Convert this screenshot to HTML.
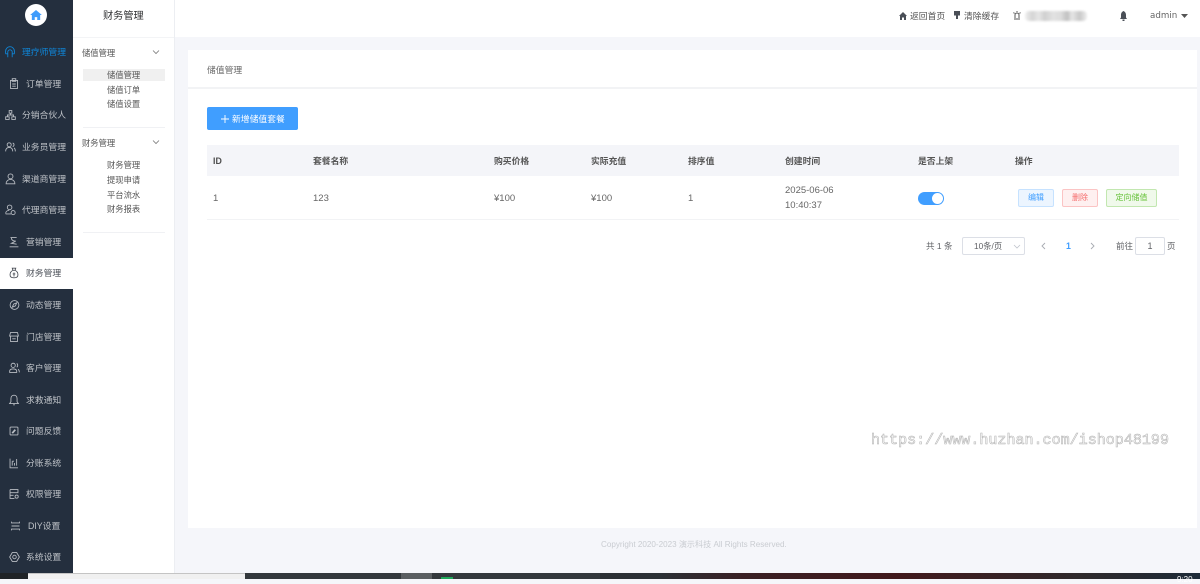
<!DOCTYPE html>
<html lang="zh"><head><meta charset="utf-8"><title>储值管理</title>
<style>
*{box-sizing:border-box;margin:0;padding:0}
html,body{width:1200px;height:579px;overflow:hidden;background:#f5f6fa;font-family:"Liberation Sans","Noto Sans CJK SC",sans-serif;color:#606266}
#w{position:absolute;left:0;top:0;width:1200px;height:579px;filter:blur(.3px)}
.a{position:absolute;white-space:nowrap}
.t{position:absolute;white-space:nowrap;font-size:8.800px;line-height:12px}
.s{font-size:8.300px;color:#555}
.h{font-weight:bold;color:#555;top:154.500px}
.r{font-size:9.500px;color:#666;top:193px}
#side{position:absolute;left:0;top:0;width:73px;height:573px;background:#242f3e}
.m{position:absolute;left:0;width:73px;height:31px;color:#bfc3c8;font-size:8.800px;line-height:31px;white-space:nowrap}
.m span{position:absolute;top:0}
.m svg{position:absolute;top:8px;fill:none;stroke:#b9bdc3;stroke-width:1;transform:scale(.88)}
</style></head><body><div id="w">
<div id="side"></div>
<div class="a" style="left:25px;top:4px;width:22px;height:22px;border-radius:50%;background:#fff"></div>
<svg class="a" style="left:30px;top:10px" width="12" height="10" viewBox="0 0 14 12"><path d="M7 0 14 6H12V12H8.500V8.500H5.500V12H2V6H0Z" fill="#3f9cfb"/></svg>

<div class="m" style="top:37px;color:#0f86d8"><svg style="left:4px" width="12" height="14" viewBox="0 0 12 14"><path style="stroke:#0f86d8" d="M1 9V6a5 5 0 0 1 10 0v3M3.500 13V7a2.500 2.500 0 0 1 5 0v6M1 9h2M9 9h2"/></svg><span style="left:22px">理疗师管理</span></div>
<div class="m" style="top:69px"><svg style="left:8px" width="12" height="14" viewBox="0 0 12 14"><path d="M2 3h8v9H2zM4 1h4v3H4zM4 7h4M4 9.500h4"/></svg><span style="left:26px">订单管理</span></div>
<div class="m" style="top:100px"><svg style="left:4px" width="13" height="14" viewBox="0 0 13 14"><path d="M5 2h3v3H5zM1 9h4v3H1zM8 9h4v3H8zM6.500 5v2M3 9V7h7v2"/></svg><span style="left:22px">分销合伙人</span></div>
<div class="m" style="top:132px"><svg style="left:4px" width="13" height="14" viewBox="0 0 13 14"><circle cx="5" cy="4.500" r="2.300"/><path d="M1 12c0-3 1.500-4.500 4-4.500S9 9 9 12M9 2.500c2 .3 2 3.700 0 4M10.500 8c1 .7 1.500 2 1.500 4"/></svg><span style="left:22px">业务员管理</span></div>
<div class="m" style="top:164px"><svg style="left:4px" width="13" height="14" viewBox="0 0 13 14"><circle cx="6.500" cy="4" r="2.800"/><path d="M1.500 12.500c0-3 2-5 5-5s5 2 5 5z"/></svg><span style="left:22px">渠道商管理</span></div>
<div class="m" style="top:195px"><svg style="left:4px" width="13" height="14" viewBox="0 0 13 14"><circle cx="5.500" cy="4" r="2.600"/><circle cx="9.500" cy="10" r="2.300"/><path d="M1 11c0-2 1.500-3.500 4-3.500M1 11.500h6"/></svg><span style="left:22px">代理商管理</span></div>
<div class="m" style="top:227px"><svg style="left:8px" width="12" height="14" viewBox="0 0 12 14"><path d="M2 2h7M3 2c0 3 2 4 5 4M8 6 3 8.500l6 1M1 12.500h10"/></svg><span style="left:26px">营销管理</span></div>
<div class="a" style="left:0;top:258px;width:73px;height:31px;background:#fff"></div>
<div class="m" style="top:258px;color:#4a4f57"><svg style="left:8px" width="12" height="14" viewBox="0 0 12 14"><path style="stroke:#4a4f57" d="M4 1.500h4L7.200 4c2.300 1 3.300 3 3.300 5 0 2.500-1.500 3.500-4.500 3.500S1.500 11.500 1.500 9c0-2 1-4 3.300-5zM4.800 4h2.400M4.500 8h3M6 6.500V11"/></svg><span style="left:26px">财务管理</span></div>
<div class="m" style="top:290px"><svg style="left:8px" width="13" height="14" viewBox="0 0 13 14"><circle cx="6.500" cy="7" r="5"/><path d="M9 4.500 7.500 8 4 9.500 5.500 6z"/></svg><span style="left:26px">动态管理</span></div>
<div class="m" style="top:322px"><svg style="left:8px" width="12" height="14" viewBox="0 0 12 14"><path d="M2 2h8l1 4H1zM2 6v6h8V6M4 9h4"/></svg><span style="left:26px">门店管理</span></div>
<div class="m" style="top:353px"><svg style="left:8px" width="13" height="14" viewBox="0 0 13 14"><circle cx="5" cy="4" r="2.400"/><path d="M1 12V10.500C1 9 2.500 8 5 8s4 1 4 2.500V12zM9 2c1.500.3 1.500 3.500 0 4M10.500 8.500c1 .5 1.500 1 1.500 3.500"/></svg><span style="left:26px">客户管理</span></div>
<div class="m" style="top:385px"><svg style="left:8px" width="12" height="14" viewBox="0 0 12 14"><path d="M6 1.500c-2.500 0-3.500 2-3.500 4V9L1 11h10L9.500 9V5.500c0-2-1-4-3.500-4zM5 12.500h2"/></svg><span style="left:26px">求救通知</span></div>
<div class="m" style="top:416px"><svg style="left:8px" width="12" height="14" viewBox="0 0 12 14"><rect x="1.500" y="2.500" width="9" height="9" rx="1"/><path d="M4 9.500 7.500 5.500" stroke-width="2"/></svg><span style="left:26px">问题反馈</span></div>
<div class="m" style="top:448px"><svg style="left:8px" width="12" height="14" viewBox="0 0 12 14"><path d="M1.500 2v10.500h9M4 5v5M4 5h2M6.500 7v3M9 2.500V10"/></svg><span style="left:26px">分账系统</span></div>
<div class="m" style="top:479px"><svg style="left:8px" width="12" height="14" viewBox="0 0 12 14"><path d="M1.500 2h9v4M1.500 2v10h5M1.500 5.500h9M1.500 8.500h4"/><circle cx="9" cy="10" r="1.800"/></svg><span style="left:26px">权限管理</span></div>
<div class="m" style="top:511px"><svg style="left:10px" width="11" height="14" viewBox="0 0 11 14"><path d="M1 2v1.500h9V2M1 12v-1.500h9V12M1 7h9"/></svg><span style="left:28px">DIY设置</span></div>
<div class="m" style="top:542px"><svg style="left:8px" width="13" height="14" viewBox="0 0 13 14"><path d="M4 2h5l3 5-3 5H4L1 7z"/><circle cx="6.500" cy="7" r="2"/></svg><span style="left:26px">系统设置</span></div>

<div class="a" style="left:73px;top:0;width:102px;height:573px;background:#fff;border-right:1px solid #eceef2"></div>
<div class="a" style="left:175px;top:0;width:1025px;height:37px;background:#fff"></div>
<div class="a" style="left:73px;top:37px;width:101px;height:1px;background:#f3f4f6"></div>
<div class="t" style="left:103px;top:10px;font-size:10.200px;line-height:14px;color:#303133">财务管理</div>
<div class="t s" style="left:82px;top:47px">储值管理</div>
<svg class="a" style="left:152px;top:49px" width="8" height="6" viewBox="0 0 8 6"><path d="M1 1.500 4 4.500 7 1.500" fill="none" stroke="#777" stroke-width=".8"/></svg>
<div class="a" style="left:83px;top:69px;width:82px;height:12px;background:#f0f0f0"></div>
<div class="t s" style="left:107px;top:69px">储值管理</div>
<div class="t s" style="left:107px;top:84px">储值订单</div>
<div class="t s" style="left:107px;top:98px">储值设置</div>
<div class="a" style="left:83px;top:127px;width:82px;height:1px;background:#f0f1f4"></div>
<div class="t s" style="left:82px;top:137px">财务管理</div>
<svg class="a" style="left:152px;top:139px" width="8" height="6" viewBox="0 0 8 6"><path d="M1 1.500 4 4.500 7 1.500" fill="none" stroke="#777" stroke-width=".8"/></svg>
<div class="t s" style="left:107px;top:159px">财务管理</div>
<div class="t s" style="left:107px;top:174px">提现申请</div>
<div class="t s" style="left:107px;top:189px">平台流水</div>
<div class="t s" style="left:107px;top:203px">财务报表</div>
<div class="a" style="left:83px;top:232px;width:82px;height:1px;background:#f0f1f4"></div>

<svg class="a" style="left:899px;top:12px" width="8" height="8" viewBox="0 0 8 8"><path d="M4 0 8 4H7V8H5V5.500H3V8H1V4H0Z" fill="#4a4f57"/></svg>
<div class="t" style="left:910px;top:10px;color:#555">返回首页</div>
<svg class="a" style="left:953px;top:11px" width="8" height="8" viewBox="0 0 8 8"><path d="M1 0H7V4.500H5V8H3V4.500H1Z" fill="#4a4f57"/></svg>
<div class="t" style="left:964px;top:10px;color:#555">清除缓存</div>
<svg class="a" style="left:1013px;top:11px" width="8" height="9" viewBox="0 0 8 9"><path d="M2 7V4a2 2 0 0 1 4 0v3M1 8h6M4 0v1M.5 1.500l1 1M7.500 1.500l-1 1" fill="none" stroke="#555" stroke-width="1"/></svg>
<div class="a" style="left:1025px;top:11px;width:62px;height:10px;border-radius:4px;background:linear-gradient(90deg,#efefef 0,#d4d4d4 12%,#e6e6e6 22%,#cfcfcf 32%,#e2e2e2 45%,#dcdcdc 58%,#c0c0c0 68%,#e6e6e6 76%,#c8c8c8 88%,#eee 100%);filter:blur(1px)"></div>
<svg class="a" style="left:1119px;top:11px" width="9" height="10" viewBox="0 0 9 10"><path d="M4.500 0C2.500 1 2 2.500 2 4V6.500L1 8H8L7 6.500V4C7 2.500 6.500 1 4.500 0ZM3.500 8.500h2V10h-2Z" fill="#4a4f57"/></svg>
<div class="t" style="left:1150px;top:10px;font-size:8.700px;color:#666;font-family:'DejaVu Sans',sans-serif">admin</div>
<svg class="a" style="left:1181px;top:14px" width="7" height="4"><path d="M0 0H7L3.500 4Z" fill="#555"/></svg>

<div class="a" style="left:188px;top:50px;width:1009px;height:478px;background:#fff"></div>
<div class="a" style="left:188px;top:87px;width:1009px;height:2px;background:#f2f3f5"></div>
<div class="t" style="left:207px;top:64px;color:#666">储值管理</div>

<div class="a" style="left:207px;top:107px;width:91px;height:23px;background:#409eff;border-radius:2px"></div>
<svg class="a" style="left:221px;top:115px" width="8" height="8"><path d="M4 0V8M0 4H8" stroke="#fff" stroke-width=".9"/></svg>
<div class="t" style="left:232px;top:113px;color:#fff">新增储值套餐</div>

<div class="a" style="left:207px;top:145px;width:972px;height:31px;background:#f4f5f9"></div>
<div class="a" style="left:207px;top:219px;width:972px;height:1px;background:#f2f3f5"></div>
<div class="t h" style="left:213px;color:#4f4f4f">ID</div>
<div class="t h" style="left:313px">套餐名称</div>
<div class="t h" style="left:494px">购买价格</div>
<div class="t h" style="left:591px">实际充值</div>
<div class="t h" style="left:688px">排序值</div>
<div class="t h" style="left:785px">创建时间</div>
<div class="t h" style="left:918px">是否上架</div>
<div class="t h" style="left:1015px">操作</div>

<div class="t r" style="left:213px">1</div>
<div class="t r" style="left:313px">123</div>
<div class="t r" style="left:494px">¥100</div>
<div class="t r" style="left:591px">¥100</div>
<div class="t r" style="left:688px">1</div>
<div class="t r" style="left:785px;top:185px">2025-06-06</div>
<div class="t r" style="left:785px;top:200px">10:40:37</div>
<div class="a" style="left:918px;top:192px;width:26px;height:13px;border-radius:7px;background:#409eff"></div>
<div class="a" style="left:932px;top:193px;width:11px;height:11px;border-radius:50%;background:#fff"></div>

<div class="a" style="left:1018px;top:189px;width:36px;height:18px;border:1px solid #c6e2ff;background:#ecf5ff;border-radius:2px;color:#409eff;font-size:8px;line-height:16px;text-align:center">编辑</div>
<div class="a" style="left:1062px;top:189px;width:36px;height:18px;border:1px solid #fbc4c4;background:#fef0f0;border-radius:2px;color:#f56c6c;font-size:8px;line-height:16px;text-align:center">删除</div>
<div class="a" style="left:1106px;top:189px;width:51px;height:18px;border:1px solid #c2e7b0;background:#f0f9eb;border-radius:2px;color:#67c23a;font-size:8px;line-height:16px;text-align:center">定向储值</div>

<div class="t" style="left:926px;top:240px;font-size:8.500px;color:#606266">共 1 条</div>
<div class="a" style="left:962px;top:237px;width:63px;height:18px;border:1px solid #dcdfe6;border-radius:2px"></div>
<div class="t" style="left:974px;top:240px;font-size:8.300px;color:#606266">10条/页</div>
<svg class="a" style="left:1013px;top:244px" width="8" height="5"><path d="M1 1 4 4 7 1" fill="none" stroke="#c0c4cc" stroke-width=".8"/></svg>
<svg class="a" style="left:1040px;top:242px" width="6" height="8"><path d="M5 1 2 4 5 7" fill="none" stroke="#a8abb2" stroke-width=".9"/></svg>
<div class="t" style="left:1066px;top:240px;font-weight:bold;color:#409eff">1</div>
<svg class="a" style="left:1090px;top:242px" width="6" height="8"><path d="M1 1 4 4 1 7" fill="none" stroke="#a8abb2" stroke-width=".9"/></svg>
<div class="t" style="left:1116px;top:240px;font-size:8.500px;color:#606266">前往</div>
<div class="a" style="left:1135px;top:237px;width:30px;height:18px;border:1px solid #dcdfe6;border-radius:2px;font-size:9px;line-height:16px;text-align:center;color:#606266">1</div>
<div class="t" style="left:1167px;top:240px;font-size:8.500px;color:#606266">页</div>

<div class="a" style="left:871px;top:430px;font-family:'Liberation Mono',monospace;font-size:15.050px;line-height:20px;color:#fff;-webkit-text-stroke:.6px #b5b5b5">https://www.huzhan.com/ishop48199</div>

<div class="t" style="left:601px;top:539px;font-size:8.100px;color:#c9ccd1">Copyright 2020-2023 演示科技 All Rights Reserved.</div>

<div class="a" style="left:0;top:573px;width:1200px;height:6px;background:linear-gradient(90deg,#2a2228 0,#2c3136 55%,#3a2024 62%,#41191c 75%,#2f2a2c 90%,#1d2b38 100%)"></div>
<div class="a" style="left:0;top:573px;width:28px;height:6px;background:#1f2327"></div>
<div class="a" style="left:28px;top:573px;width:217px;height:6px;background:#f0f0f0;border-top:1px solid #c4c4c4"></div>
<div class="a" style="left:245px;top:573px;width:355px;height:6px;background:#33383c"></div>
<div class="a" style="left:401px;top:573px;width:31px;height:6px;background:#5a5e61"></div>
<div class="a" style="left:441px;top:577px;width:12px;height:2px;background:#1fa85a"></div>
<div class="t" style="left:1177px;top:575px;font-size:8px;line-height:9px;color:#fff">9:20</div>
</div></body></html>
